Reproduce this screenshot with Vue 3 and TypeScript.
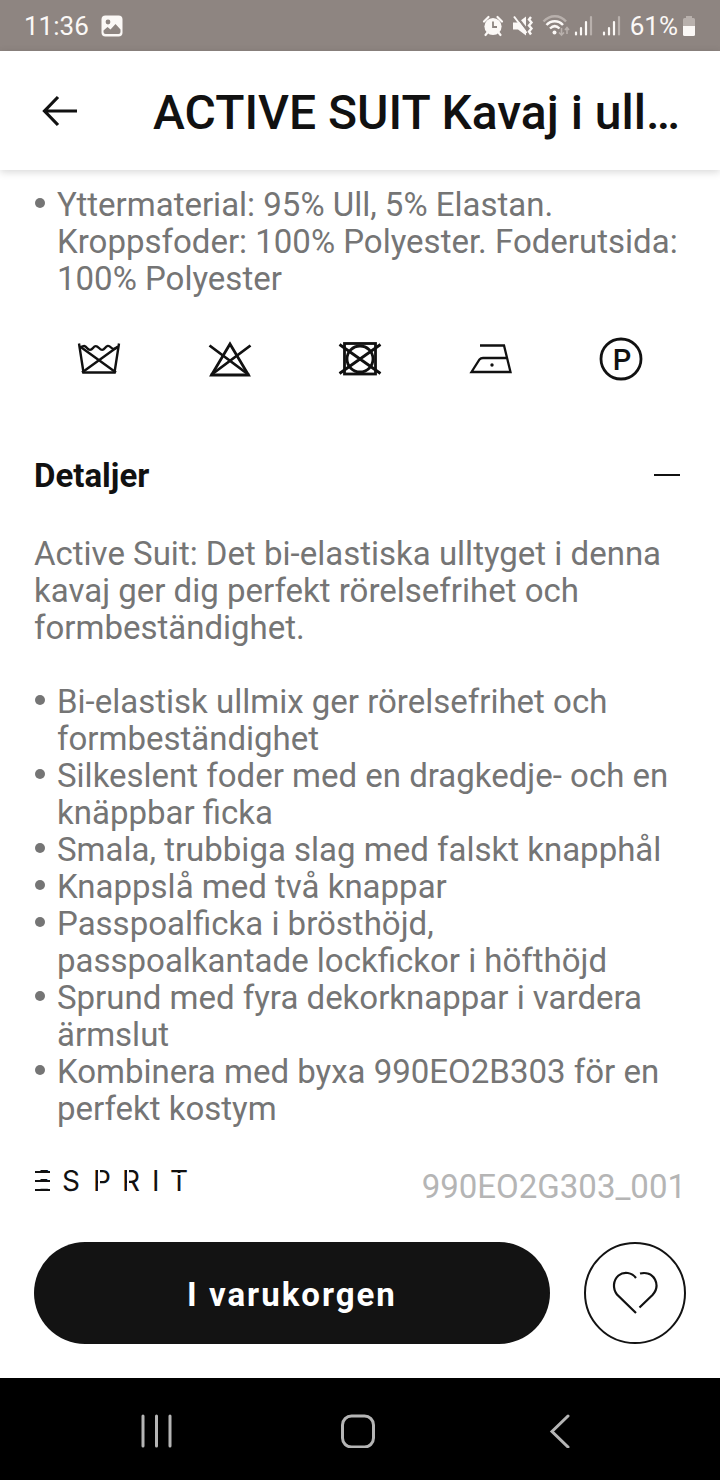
<script setup lang="ts">
import { ref } from 'vue'

const materials: string[] = [
  'Yttermaterial: 95% Ull, 5% Elastan. Kroppsfoder: 100% Polyester. Foderutsida: 100% Polyester',
]

const features: string[] = [
  'Bi-elastisk ullmix ger rörelsefrihet och formbeständighet',
  'Silkeslent foder med en dragkedje- och en knäppbar ficka',
  'Smala, trubbiga slag med falskt knapphål',
  'Knappslå med två knappar',
  'Passpoalficka i brösthöjd, passpoalkantade lockfickor i höfthöjd',
  'Sprund med fyra dekorknappar i vardera ärmslut',
  'Kombinera med byxa 990EO2B303 för en perfekt kostym',
]

const detailsOpen = ref(true)
const favourite = ref(false)
</script>

<template>
  <div class="screen">
    <div class="status">
      <span class="clock">11:36</span>
      <svg class="picture" width="22" height="22" viewBox="0 0 22 22" aria-hidden="true">
        <rect x="0.5" y="0.5" width="21" height="21" rx="4" fill="#fbf8f6" />
        <circle cx="7" cy="7" r="2.4" fill="#8e8581" />
        <path d="M2.5 15.5 6.5 12l3 2.5 5-5.5 5 5.5v2.5a2 2 0 0 1-2 2h-13a2 2 0 0 1-2-2z" fill="#8e8581" />
      </svg>
      <div class="signals">
        <svg width="22" height="22" viewBox="0 0 22 22" aria-hidden="true">
          <circle cx="11" cy="11.5" r="8.6" fill="#fbf8f6" />
          <path d="M2 6.5 6.5 2M20 6.5 15.5 2M5.5 17.5 3.5 20M16.5 17.5l2 2.5" fill="none" stroke="#fbf8f6" stroke-width="2.2" stroke-linecap="round" />
          <path d="M11 6.5v5.5h4" fill="none" stroke="#8e8581" stroke-width="1.8" />
        </svg>
        <svg width="22" height="22" viewBox="0 0 22 22" aria-hidden="true">
          <path d="M1 7.5h5L14 1.5v19l-8-6H1z" fill="#fbf8f6" />
          <path d="M3.5 0 17 17.5" stroke="#8e8581" stroke-width="2.5" />
          <path d="M2 1.5 14.5 18" stroke="#fbf8f6" stroke-width="2" />
          <path d="M19 2l-2 2.5 2.5 3-2.5 3 2.5 3-2.5 3 2 3" fill="none" stroke="#fbf8f6" stroke-width="2.4" />
        </svg>
        <svg class="wifi" width="28" height="22" viewBox="0 0 28 22" fill="none" aria-hidden="true">
          <path d="M1.5 6.5C8-0.5 18-0.5 24 6.5" stroke="#b8b0ac" stroke-width="2.4" />
          <path d="M4.5 10C9 5 16.5 5 21 10M8 13.5c3-3 6.5-3 9.5 0" stroke="#fbf8f6" stroke-width="2.4" />
          <circle cx="12.5" cy="17.5" r="2" fill="#fbf8f6" />
          <path d="M19.5 13v7M17 17.5l2.5 2.5 2.5-2.5M25 19v-6M23 15l2-2.5 2 2.5" stroke="#b8b0ac" stroke-width="1.6" />
        </svg>
        <svg v-for="n in 2" :key="n" width="20" height="22" viewBox="0 0 20 22" stroke-width="2.2" stroke-linecap="round" aria-hidden="true">
          <path d="M2 17.5v2M7 13v6.5M12 7v12.5" stroke="#fbf8f6" />
          <path d="M17 2v17.5" stroke="#b8b0ac" />
        </svg>
        <span class="charge">61%</span>
        <svg width="14" height="22" viewBox="0 0 14 22" aria-hidden="true">
          <path d="M4 1h6v2h1.5A1.5 1.5 0 0 1 13 4.5V12H1V4.5A1.5 1.5 0 0 1 2.5 3H4z" fill="#b8b0ac" />
          <path d="M1 11h12v8.500a1.500 1.500 0 0 1-1.500 1.500h-9A1.500 1.500 0 0 1 1 19.500z" fill="#fbf8f6" />
        </svg>
      </div>
    </div>

    <header class="bar">
      <button class="plain" type="button" aria-label="Tillbaka">
        <svg width="36" height="32" viewBox="0 0 36 32" fill="none" stroke="#111" stroke-width="3.2" aria-hidden="true">
          <path d="M35 16H3M16 2 2.5 16 16 30" />
        </svg>
      </button>
      <h1>ACTIVE SUIT Kavaj i ull…</h1>
    </header>

    <main>
      <ul class="copy">
        <li v-for="m in materials" :key="m">{{ m }}</li>
      </ul>

      <div class="care" role="group" aria-label="Skötselråd">
        <svg width="44" height="44" viewBox="0 0 44 44" fill="none" stroke="#111" stroke-width="2.4" aria-hidden="true">
          <path d="M2 6.5 6.5 35.5h31L42 6.5" />
          <path d="M3 10.5c4-2 5-2 7 .5s4 2.5 6 0 3.5-2.5 6 0 4 2.5 6 0 3.5-3 6-.5 3 1.5 7-.5" />
          <path d="M3 9.5 39 35.5M41 9.5 5 35.5" />
        </svg>
        <svg width="44" height="44" viewBox="0 0 44 44" fill="none" stroke="#111" stroke-width="2.8" aria-hidden="true">
          <path d="M22 7 3.5 38h37z" />
          <path d="M1.5 8.5 41 38M42.5 8.5 3 38" />
        </svg>
        <svg width="44" height="44" viewBox="0 0 44 44" fill="none" stroke="#111" stroke-width="2.8" aria-hidden="true">
          <rect x="6.5" y="6.5" width="31" height="30.5" />
          <circle cx="22" cy="22" r="13" />
          <path d="M1.5 7.5 42.5 36.5M42.5 7.5 1.5 36.5" />
        </svg>
        <svg width="44" height="44" viewBox="0 0 44 44" fill="none" stroke="#111" stroke-width="2.3" aria-hidden="true">
          <path d="M11 8.5h24L41.5 35H2.5l8-12.5c1-1.2 2-1.5 3.5-1.5h24" />
          <circle cx="23" cy="28" r="1.7" fill="#111" stroke="none" />
        </svg>
        <svg width="44" height="44" viewBox="0 0 44 44" aria-hidden="true">
          <circle cx="22" cy="22" r="20" fill="none" stroke="#111" stroke-width="2.8" />
          <text class="care-letter" x="23" y="33" text-anchor="middle">P</text>
        </svg>
      </div>

      <section>
        <h2>
          <button class="toggle" type="button" :aria-expanded="detailsOpen" @click="detailsOpen = !detailsOpen">
            Detaljer
            <svg width="26" height="26" viewBox="0 0 26 26" stroke="#111" stroke-width="2" aria-hidden="true">
              <path d="M0 12h26" />
              <path v-if="!detailsOpen" d="M13 0v24" />
            </svg>
          </button>
        </h2>
        <div v-if="detailsOpen" class="copy">
          <p>Active Suit: Det bi-elastiska ulltyget i denna kavaj ger dig perfekt rörelsefrihet och formbeständighet.</p>
          <ul>
            <li v-for="f in features" :key="f">{{ f }}</li>
          </ul>
        </div>
      </section>

      <div class="brand">
        <svg class="logo" width="156" height="28" viewBox="0 0 156 28" role="img" aria-label="Esprit">
          <text class="wordmark" x="-1 28 59 88 118 136" y="24">ESPRIT</text>
          <path d="M65 2v24M94 2v24M138 7h14" stroke="#fff" stroke-width="2" />
          <path d="M3 2v24" stroke="#fff" stroke-width="7" />
          <path d="M1 5h15M1 14h15M1 23h15" stroke="#111" stroke-width="2" />
        </svg>
        <span class="sku">990EO2G303_001</span>
      </div>

      <div class="actions">
        <button class="buy" type="button">I varukorgen</button>
        <button class="heart" type="button" aria-label="Spara som favorit" :aria-pressed="favourite" @click="favourite = !favourite">
          <svg width="46" height="44" viewBox="0 0 46 44" fill="none" stroke="#111" stroke-width="2.2" aria-hidden="true">
            <path d="M24 7C20 1.500 12 0 6.500 4.500 1 9.500 .500 17.500 5 23.500L24 42" />
            <path d="M28 2.500c6-1.500 12 .500 15 6 2.500 5 1.500 11-2.500 15.500L27.500 36.500" />
          </svg>
        </button>
      </div>
    </main>

    <nav aria-label="System">
      <button class="plain" type="button" aria-label="Senaste appar">
        <svg width="34" height="34" viewBox="0 0 34 34" stroke="#b5b5b5" stroke-width="3" stroke-linecap="round" aria-hidden="true">
          <path d="M3 2v30M16.5 2v30M30 2v30" />
        </svg>
      </button>
      <button class="plain" type="button" aria-label="Hem">
        <svg width="34" height="34" viewBox="0 0 34 34" fill="none" stroke="#b5b5b5" stroke-width="3" aria-hidden="true">
          <rect x="1.5" y="2" width="31" height="31" rx="9" />
        </svg>
      </button>
      <button class="plain" type="button" aria-label="Bakåt">
        <svg width="34" height="34" viewBox="0 0 34 34" fill="none" stroke="#b5b5b5" stroke-width="3" stroke-linecap="round" aria-hidden="true">
          <path d="M27 2 11 17.500l16 15.500" />
        </svg>
      </button>
    </nav>
  </div>
</template>

<style>
body {
  margin: 0;
  background: #fff;
}
</style>

<style scoped>
.screen {
  min-height: 100vh;
  display: flex;
  flex-direction: column;
  font-family: Roboto, sans-serif;
  color: #111;
}

button {
  font-family: inherit;
  cursor: pointer;
}

svg {
  display: block;
  flex: none;
}

.plain {
  display: flex;
  padding: 0;
  border: 0;
  background: none;
}

.status {
  display: flex;
  align-items: center;
  height: 51px;
  padding: 0 24px;
  background: #8e8581;
  color: #fbf8f6;
  font-size: 26px;
}

.picture {
  margin-left: 12px;
}

.signals {
  display: flex;
  align-items: center;
  gap: 8px;
  margin-left: auto;
}

.wifi {
  margin-right: -4px;
}

.charge {
  margin-right: -4px;
}

.bar {
  display: flex;
  align-items: center;
  gap: 75px;
  height: 119px;
  padding: 0 34px 0 42px;
  box-shadow: 0 2px 8px rgba(0, 0, 0, 0.16);
}

h1 {
  flex: 1;
  min-width: 0;
  margin: 0;
  padding-top: 4px;
  overflow: hidden;
  text-overflow: ellipsis;
  white-space: nowrap;
  font-size: 48px;
  font-weight: 500;
}

main {
  flex: 1;
  padding: 16px 34px 34px;
}

.copy {
  color: #757575;
  font-size: 33px;
  line-height: 37px;
}

ul {
  margin: 0;
  padding: 0;
  list-style: none;
}

li {
  position: relative;
  padding-left: 23px;
}

li::before {
  content: "";
  position: absolute;
  left: 1px;
  top: 12px;
  width: 10px;
  height: 10px;
  border-radius: 50%;
  background: #757575;
}

p {
  margin: 0 0 37px;
}

.care {
  display: flex;
  justify-content: space-between;
  padding: 40px 43px 0;
}

.care-letter {
  font-size: 29px;
  font-weight: 500;
  fill: #111;
}

h2 {
  margin: 75px 0 39px;
  font-size: 33px;
}

.toggle {
  display: flex;
  align-items: center;
  justify-content: space-between;
  width: 100%;
  padding: 0 6px 0 0;
  border: 0;
  background: none;
  color: inherit;
  font-size: 33px;
  font-weight: 700;
  line-height: 40px;
  text-align: left;
}

.brand {
  display: flex;
  align-items: flex-start;
  justify-content: space-between;
  margin-top: 40px;
}

.logo {
  overflow: visible;
}

.wordmark {
  font-family: Inter, sans-serif;
  font-size: 28px;
  font-weight: 400;
  fill: #111;
}

.sku {
  color: #b5b5b5;
  font-size: 33px;
  line-height: 40px;
}

.actions {
  display: flex;
  gap: 34px;
  margin-top: 35px;
}

.buy {
  flex: 1;
  height: 102px;
  padding: 2px 0 0;
  border: 0;
  border-radius: 51px;
  background: #131313;
  color: #fff;
  font-size: 33px;
  font-weight: 700;
  letter-spacing: 2px;
}

.heart {
  display: flex;
  align-items: center;
  justify-content: center;
  width: 102px;
  height: 102px;
  padding: 0;
  border: 2px solid #131313;
  border-radius: 50%;
  background: #fff;
}

nav {
  display: flex;
  align-items: center;
  justify-content: space-between;
  height: 102px;
  padding: 4px 145px 0 140px;
  box-sizing: border-box;
  background: #000;
}
</style>
